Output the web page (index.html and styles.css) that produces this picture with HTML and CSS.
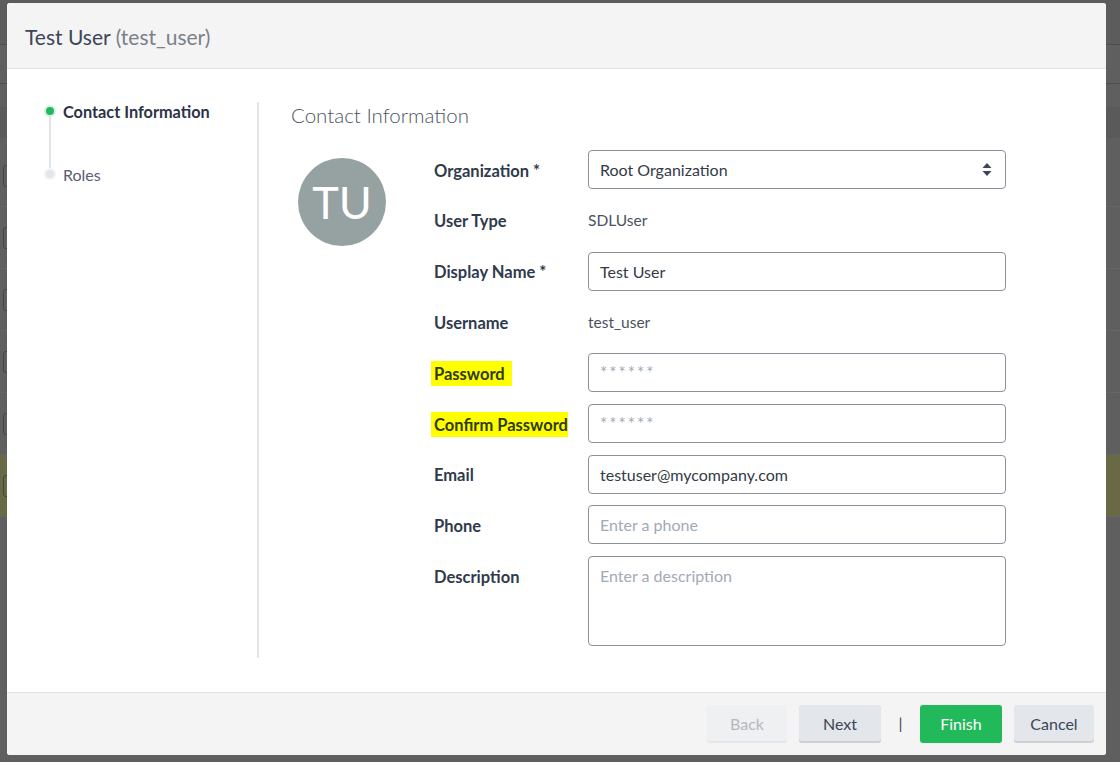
FILE: index.html
```html
<!DOCTYPE html>
<html lang="en">
<head>
  <meta charset="UTF-8">
  <meta name="viewport" content="width=device-width, initial-scale=1.0">
  <title>Edit User</title>
  <link rel="stylesheet" href="styles.css">
</head>
<body>

  <!-- Page behind the dialog (dimmed) -->
  <div class="backdrop">
    <div class="bg-toolbar"></div>
    <div class="bg-sub"></div>
    <div class="bg-head"></div>
    <div class="bg-row"><span class="bg-check"></span></div>
    <div class="bg-row"><span class="bg-check"></span></div>
    <div class="bg-row"><span class="bg-check"></span></div>
    <div class="bg-row"><span class="bg-check"></span></div>
    <div class="bg-row"><span class="bg-check"></span></div>
    <div class="bg-row selected"><span class="bg-check"></span></div>
  </div>

  <!-- Dialog -->
  <div class="modal">
    <header class="modal-header">
      <h1>Test User <span class="muted">(test_user)</span></h1>
    </header>

    <div class="modal-body">
      <ul class="steps">
        <li class="step active"><span class="dot"></span>Contact Information</li>
        <li class="step"><span class="dot"></span>Roles</li>
      </ul>

      <section class="content">
        <h2>Contact Information</h2>
        <div class="content-row">
          <div class="avatar-col">
            <div class="avatar">TU</div>
          </div>

          <form class="user-form">
            <label>Organization *</label>
            <div class="select">
              <span>Root Organization</span>
              <svg width="10" height="13" viewBox="0 0 10 13"><path d="M5 0 L9.5 5 H0.5 Z M0.5 8 H9.5 L5 13 Z" fill="#3c4658"/></svg>
            </div>

            <label>User Type</label>
            <div class="value">SDLUser</div>

            <label>Display Name *</label>
            <input type="text" value="Test User">

            <label>Username</label>
            <div class="value">test_user</div>

            <label><mark class="pw-mark">Password</mark></label>
            <input type="password" placeholder="******">

            <label><mark>Confirm Password</mark></label>
            <input type="password" placeholder="******">

            <label>Email</label>
            <input type="text" value="testuser@mycompany.com">

            <label>Phone</label>
            <input type="text" placeholder="Enter a phone">

            <label class="top">Description</label>
            <textarea placeholder="Enter a description"></textarea>
          </form>
        </div>
      </section>
    </div>

    <footer class="modal-footer">
      <button class="btn" disabled>Back</button>
      <button class="btn">Next</button>
      <span class="sep">|</span>
      <button class="btn primary">Finish</button>
      <button class="btn">Cancel</button>
    </footer>
  </div>

</body>
</html>
```

FILE: styles.css
```css
body {
  margin: 0;
  font-family: Lato, "Open Sans", sans-serif;
  background: #5f5f5f;
  color: #2f3a4c;
  overflow: hidden;
}

/* dimmed page behind */
.backdrop {
  height: 762px;
}
.bg-toolbar {
  height: 44px;
  background: #5c5c5c;
  border-bottom: 1px solid #4d4d4d;
}
.bg-sub {
  height: 38px;
  border-bottom: 1px solid #4f4f4f;
  margin-bottom: 23px;
}
.bg-head {
  height: 31px;
  margin-bottom: 7px;
  background: #5a5a5a;
}
.bg-row {
  height: 61px;
  border-bottom: 1px solid #666;
  display: flex;
  align-items: center;
}
.bg-row.selected {
  background: #6a6945;
}
.bg-check {
  width: 14px;
  height: 20px;
  margin-left: 3px;
  border: 1px solid #444;
  border-radius: 3px;
}

/* dialog */
.modal {
  position: absolute;
  top: 3px;
  left: 7px;
  width: 1099px;
  height: 752px;
  background: #fff;
  border-radius: 3px;
  display: flex;
  flex-direction: column;
  overflow: hidden;
}
.modal-header {
  height: 65px;
  background: #f4f4f4;
  border-bottom: 1px solid #dde3ea;
  display: flex;
  align-items: center;
  padding-left: 18px;
  flex-shrink: 0;
}
.modal-header h1 {
  margin: 2px 0 0;
  font-size: 21px;
  font-weight: 400;
  color: #3b4659;
}
.modal-header .muted {
  color: #7b8089;
}

.modal-body {
  flex: 1;
  display: flex;
  padding: 33px 0 34px;
}

/* stepper */
.steps {
  list-style: none;
  margin: 0;
  padding: 0 0 0 39px;
  width: 211px;
  border-right: 2px solid #e3e7ec;
}
.step {
  position: relative;
  font-size: 16px;
  line-height: 20px;
  padding-left: 17px;
  color: #5a6070;
  height: 63px;
}
.step.active {
  font-size: 16.3px;
  font-weight: 700;
  color: #2b3445;
}
.step .dot {
  position: absolute;
  left: 0;
  top: 5px;
  width: 8px;
  height: 8px;
  border-radius: 50%;
  background: #e3e7eb;
  box-shadow: 0 0 0 2px #f1f3f5;
}
.step.active .dot {
  background: #22b85c;
  box-shadow: 0 0 0 2px #d8f2e2;
}
.step.active::after {
  content: "";
  position: absolute;
  left: 3px;
  top: 13px;
  width: 2px;
  height: 58px;
  background: #e1e5ea;
}

/* content */
.content {
  padding-left: 32px;
}
.content h2 {
  margin: 0 0 22px;
  font-size: 20.5px;
  font-weight: 300;
  line-height: 26px;
  color: #4c5563;
}
.content-row {
  display: flex;
}
.avatar-col {
  width: 143px;
}
.avatar {
  width: 88px;
  height: 88px;
  margin: 8px 0 0 7px;
  border-radius: 50%;
  background: #96a2a2;
  color: #fff;
  font-size: 45px;
  display: flex;
  align-items: center;
  justify-content: center;
}

.user-form {
  display: grid;
  grid-template-columns: 154px 418px;
  grid-auto-rows: 39px;
  row-gap: 11.75px;
}
.user-form label {
  font-size: 16.5px;
  font-weight: 700;
  color: #2f3a4c;
  display: flex;
  align-items: center;
  padding-top: 2px;
}
.user-form label.top {
  align-items: flex-start;
  padding-top: 11px;
}
mark {
  background: #ffff00;
  color: #2f3a10;
  padding: 3px 0 2px 3px;
  margin-left: -3px;
}
mark.pw-mark {
  padding-right: 7px;
}
.value {
  display: flex;
  align-items: center;
  font-size: 15.5px;
  color: #4a5260;
}
.user-form input,
.select,
.user-form textarea {
  box-sizing: border-box;
  width: 418px;
  height: 39px;
  border: 1px solid #8b929c;
  border-radius: 4px;
  padding: 0 11px;
  font-family: Lato, sans-serif;
  font-size: 16px;
  color: #333b47;
  background: #fff;
}
.select {
  display: flex;
  align-items: center;
  justify-content: space-between;
  padding-right: 13px;
}
.user-form input::placeholder,
.user-form textarea::placeholder {
  color: #a2aab5;
}
.user-form input[type="password"]::placeholder {
  letter-spacing: 2px;
  font-size: 17px;
}
.user-form textarea {
  grid-row: span 2;
  height: 90px;
  padding-top: 9px;
  resize: none;
}

/* footer */
.modal-footer {
  height: 50px;
  flex-shrink: 0;
  background: #f4f4f4;
  border-top: 1px solid #dde3ea;
  display: flex;
  justify-content: flex-end;
  align-items: flex-start;
  padding: 12px 12px 0 0;
  gap: 12px;
}
.btn {
  height: 38px;
  min-width: 80px;
  padding: 0 16px 2px;
  border: none;
  border-radius: 3px;
  background: #e3e6ea;
  box-shadow: inset 0 -2px 0 #cdd1d6;
  font-family: Lato, sans-serif;
  font-size: 16px;
  color: #3b4556;
}
.btn:nth-child(2) {
  width: 82px;
}
.btn[disabled] {
  background: #eef0f2;
  box-shadow: inset 0 -2px 0 #e4e7ea;
  color: #b5b9bf;
}
.btn.primary {
  width: 82px;
  background: #22b95b;
  box-shadow: none;
  color: #fff;
}
.sep {
  width: 15px;
  line-height: 36px;
  text-align: center;
  font-size: 16px;
  color: #3b4556;
}
```
